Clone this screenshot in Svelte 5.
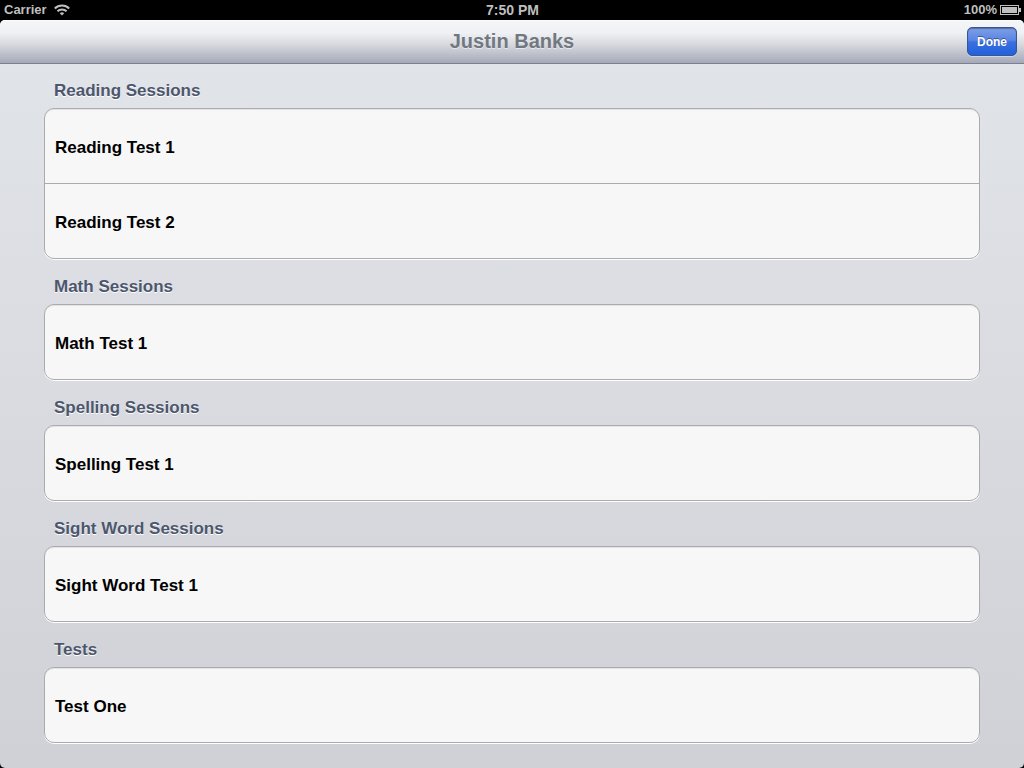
<script lang="ts">
  type Section = { title: string; rows: string[] };

  const student = 'Justin Banks';

  const sections: Section[] = [
    { title: 'Reading Sessions', rows: ['Reading Test 1', 'Reading Test 2'] },
    { title: 'Math Sessions', rows: ['Math Test 1'] },
    { title: 'Spelling Sessions', rows: ['Spelling Test 1'] },
    { title: 'Sight Word Sessions', rows: ['Sight Word Test 1'] },
    { title: 'Tests', rows: ['Test One'] }
  ];
</script>

<div class="device">
  <div class="status">
    <div class="status-left">
      <span>Carrier</span>
      <svg class="wifi" viewBox="0 0 16 12" width="16" height="12" aria-hidden="true">
        <path d="M0.8 4.5a10.2 10.2 0 0 1 14.4 0" />
        <path d="M3.4 7.3a6.5 6.5 0 0 1 9.2 0" />
        <path class="dot" d="M5.8 9.3a3.2 3.2 0 0 1 4.4 0L8 11.6z" />
      </svg>
    </div>
    <span class="clock">7:50 PM</span>
    <div class="status-right">
      <span>100%</span>
      <svg class="battery" viewBox="0 0 21 10" width="21" height="10" aria-hidden="true">
        <rect class="case" x="0.5" y="0.5" width="18" height="9" />
        <rect x="2" y="2" width="15" height="6" />
        <path d="M19 3h2v4h-2z" />
      </svg>
    </div>
  </div>

  <div class="screen">
    <header class="navbar">
      <h1>{student}</h1>
      <button type="button" class="done">Done</button>
    </header>

    <main>
      {#each sections as section}
        <section>
          <h2>{section.title}</h2>
          <ul>
            {#each section.rows as row}
              <li>{row}</li>
            {/each}
          </ul>
        </section>
      {/each}
    </main>
  </div>
</div>

<style>
  :global(body) {
    background: #000;
  }
  .device {
    display: flex;
    flex-direction: column;
    min-height: 100vh;
    background: #000;
    font-family: "Liberation Sans", Helvetica, Arial, sans-serif;
    font-weight: bold;
  }

  .status {
    display: grid;
    grid-template-columns: 1fr auto 1fr;
    align-items: center;
    height: 20px;
    padding: 0 3px 0 4px;
    color: #bfbfbf;
    font-size: 13px;
    line-height: 20px;
  }
  .status-left,
  .status-right {
    display: flex;
    align-items: center;
  }
  .status-left { gap: 7px; }
  .status-right { justify-content: flex-end; gap: 3px; }
  .clock { font-size: 14px; }
  .wifi { fill: none; stroke: #bfbfbf; stroke-width: 2; }
  .wifi .dot { fill: #bfbfbf; stroke: none; }
  .battery { fill: #bfbfbf; }
  .battery .case { fill: none; stroke: #bfbfbf; }

  .screen {
    flex: 1;
    overflow: hidden;
    border-radius: 5px;
    background: linear-gradient(#e2e5ea, #d0d1d6);
  }

  .navbar {
    display: grid;
    grid-template-columns: 1fr auto 1fr;
    align-items: center;
    box-sizing: border-box;
    height: 44px;
    padding: 0 7px;
    border-bottom: 1px solid #7b8091;
    background: linear-gradient(#fff, #f4f5f7 3%, #f0f1f4 30%, #d6d8de 58%, #a5a9b8);
  }
  h1 {
    grid-column: 2;
    margin: 0;
    padding-bottom: 2px;
    color: #717880;
    font-size: 20px;
    line-height: 24px;
    text-shadow: 0 1px 0 rgba(255, 255, 255, 0.5);
  }
  .done {
    justify-self: end;
    height: 29px;
    padding: 0 9px;
    border: 1px solid #3a5690;
    border-radius: 5px;
    background: linear-gradient(#7f9fe6, #5985e4 45%, #3a70e0 52%, #2260dd);
    box-shadow: 0 1px 0 rgba(255, 255, 255, 0.4), inset 0 1px 1px rgba(40, 60, 110, 0.5);
    color: #fff;
    font: bold 12px "Liberation Sans", Helvetica, Arial, sans-serif;
    text-shadow: 0 -1px 0 rgba(0, 0, 0, 0.4);
  }

  main {
    padding: 0 44px 25px;
  }
  h2 {
    margin: 0;
    padding: 18px 10px 7px;
    color: #4c566c;
    font-size: 17px;
    line-height: 20px;
    text-shadow: 0 1px 0 #fff;
  }
  section:first-child h2 { padding-top: 17px; }
  ul {
    margin: 0;
    padding: 0;
    overflow: hidden;
    border: 1px solid #a9abae;
    border-radius: 10px;
    background: #f7f7f7;
    box-shadow: 0 1px 0 #fff, inset 0 1px 0 #e4e4e5;
    list-style: none;
  }
  li {
    padding: 3px 10px 0;
    color: #000;
    font-size: 17px;
    line-height: 71px;
  }
  li + li { border-top: 1px solid #a9abae; }
</style>
